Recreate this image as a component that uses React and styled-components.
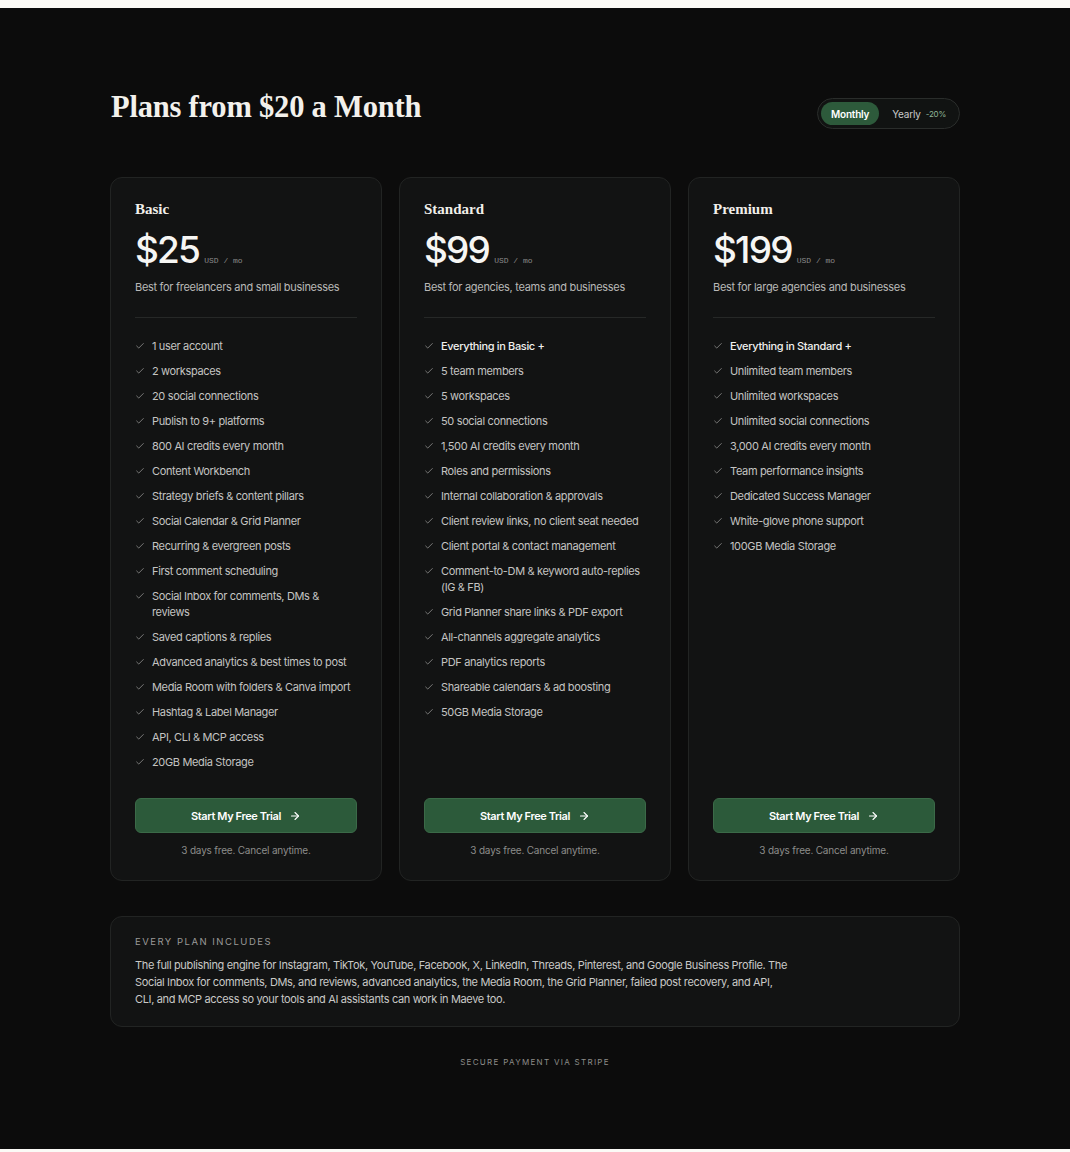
import styled, { createGlobalStyle } from 'styled-components';
import { Check, ArrowRight } from 'lucide-react';

const GlobalStyle = createGlobalStyle`
    * {
        box-sizing: border-box;
    }

    body {
        margin: 0;
        background: #fbfaf6;
        font-family: Inter, "Noto Sans", sans-serif;
        -webkit-font-smoothing: antialiased;
    }
`

const plans = [
    {
        name: "Basic",
        price: "$25",
        description: "Best for freelancers and small businesses",
        features: [
            "1 user account",
            "2 workspaces",
            "20 social connections",
            "Publish to 9+ platforms",
            "800 AI credits every month",
            "Content Workbench",
            "Strategy briefs & content pillars",
            "Social Calendar & Grid Planner",
            "Recurring & evergreen posts",
            "First comment scheduling",
            "Social Inbox for comments, DMs & reviews",
            "Saved captions & replies",
            "Advanced analytics & best times to post",
            "Media Room with folders & Canva import",
            "Hashtag & Label Manager",
            "API, CLI & MCP access",
            "20GB Media Storage",
        ],
    },
    {
        name: "Standard",
        price: "$99",
        description: "Best for agencies, teams and businesses",
        highlight: "Everything in Basic +",
        features: [
            "5 team members",
            "5 workspaces",
            "50 social connections",
            "1,500 AI credits every month",
            "Roles and permissions",
            "Internal collaboration & approvals",
            "Client review links, no client seat needed",
            "Client portal & contact management",
            "Comment-to-DM & keyword auto-replies (IG & FB)",
            "Grid Planner share links & PDF export",
            "All-channels aggregate analytics",
            "PDF analytics reports",
            "Shareable calendars & ad boosting",
            "50GB Media Storage",
        ],
    },
    {
        name: "Premium",
        price: "$199",
        description: "Best for large agencies and businesses",
        highlight: "Everything in Standard +",
        features: [
            "Unlimited team members",
            "Unlimited workspaces",
            "Unlimited social connections",
            "3,000 AI credits every month",
            "Team performance insights",
            "Dedicated Success Manager",
            "White-glove phone support",
            "100GB Media Storage",
        ],
    },
];

function Feature({ text, strong }) {
    return (
        <FeatureRow $strong={strong}>
            <CheckMark>
                <Check size={10} strokeWidth={2} />
            </CheckMark>
            <span>{text}</span>
        </FeatureRow>
    )
}

function PlanCard({ plan }) {
    return (
        <Card>
            <PlanName>{plan.name}</PlanName>
            <PriceRow>
                <Price>{plan.price}</Price>
                <Unit>USD / mo</Unit>
            </PriceRow>
            <Description>{plan.description}</Description>
            <Divider />
            <Features>
                {plan.highlight && <Feature text={plan.highlight} strong />}
                {plan.features.map(f => <Feature key={f} text={f} />)}
            </Features>
            <TrialButton>
                Start My Free Trial
                <ArrowRight size={12} strokeWidth={2.2} />
            </TrialButton>
            <Footnote>3 days free. Cancel anytime.</Footnote>
        </Card>
    )
}

export default function App() {
    return (
        <>
            <GlobalStyle />
            <Page>
                <Container>
                    <Header>
                        <Title>Plans from $20 a Month</Title>
                        <Toggle>
                            <ToggleOption $active>Monthly</ToggleOption>
                            <ToggleOption>
                                Yearly <Discount>-20%</Discount>
                            </ToggleOption>
                        </Toggle>
                    </Header>
                    <Cards>
                        {plans.map(plan => <PlanCard key={plan.name} plan={plan} />)}
                    </Cards>
                    <Includes>
                        <IncludesLabel>Every plan includes</IncludesLabel>
                        <IncludesText>
                            The full publishing engine for Instagram, TikTok, YouTube, Facebook, X, LinkedIn, Threads, Pinterest, and Google Business Profile. The Social Inbox for comments, DMs, and reviews, advanced analytics, the Media Room, the Grid Planner, failed post recovery, and API, CLI, and MCP access so your tools and AI assistants can work in Maeve too.
                        </IncludesText>
                    </Includes>
                    <Secure>Secure payment via Stripe</Secure>
                </Container>
            </Page>
        </>
    )
}

const Page = styled.div`
    margin-top: 8px;
    min-height: 1141px;
    background: #0c0c0c;
    padding: 90px 0 60px;
`

const Container = styled.div`
    width: 850px;
    margin: 0 auto;
    display: flex;
    flex-direction: column;
`

const Header = styled.div`
    display: flex;
    justify-content: space-between;
    align-items: center;
    height: 31px;
    margin-bottom: 48px;
`

const Title = styled.h1`
    margin: 0 0 13px 1px;
    font-family: "Liberation Serif", "DejaVu Serif", serif;
    font-weight: 700;
    font-size: 30.5px;
    line-height: 36px;
    color: #f3f1ec;
    letter-spacing: -0.2px;
`

const Toggle = styled.div`
    width: 143px;
    height: 31px;
    display: flex;
    align-items: center;
    gap: 2px;
    padding: 0 3px;
    border-radius: 999px;
    background: #111312;
    border: 1px solid #2a2d2b;
`

const ToggleOption = styled.div`
    height: 23px;
    padding: 0 ${p => p.$active ? '10px' : '11px'};
    display: flex;
    align-items: center;
    gap: 5px;
    border-radius: 999px;
    font-size: 10px;
    font-weight: ${p => p.$active ? 600 : 400};
    letter-spacing: -0.2px;
    color: ${p => p.$active ? '#ffffff' : '#c9c9c9'};
    background: ${p => p.$active ? '#2d5a3b' : 'transparent'};
    white-space: nowrap;
`

const Discount = styled.span`
    font-size: 8px;
    color: #8fb597;
`

const Cards = styled.div`
    display: grid;
    grid-template-columns: repeat(3, 1fr);
    gap: 17px;
`

const Card = styled.div`
    display: flex;
    flex-direction: column;
    padding: 22px 24px 22px;
    background: #121313;
    border: 1px solid #222423;
    border-radius: 12px;
`

const PlanName = styled.h2`
    margin: 0;
    font-family: "Liberation Serif", "DejaVu Serif", serif;
    font-weight: 700;
    font-size: 15px;
    line-height: 18px;
    color: #f1efea;
`

const PriceRow = styled.div`
    display: flex;
    align-items: baseline;
    gap: 5px;
    margin-top: 10px;
`

const Price = styled.span`
    font-size: 37px;
    line-height: 44px;
    font-weight: 500;
    color: #f6f6f4;
    letter-spacing: -1.8px;
`

const Unit = styled.span`
    font-family: "Liberation Mono", monospace;
    font-size: 8px;
    color: #8a8a8a;
`

const Description = styled.p`
    margin: 7px 0 0;
    font-size: 11px;
    line-height: 16px;
    color: #b9b9b7;
    letter-spacing: -0.3px;
`

const Divider = styled.hr`
    margin: 22px 0 0;
    border: none;
    border-top: 1px solid #262827;
`

const Features = styled.ul`
    list-style: none;
    margin: 20px 0 0;
    padding: 0;
    display: flex;
    flex-direction: column;
    gap: 9px;
    flex: 1;
`

const FeatureRow = styled.li`
    display: flex;
    align-items: flex-start;
    gap: 7px;
    font-size: 11px;
    line-height: 16px;
    letter-spacing: -0.35px;
    color: ${p => p.$strong ? '#f0f0ee' : '#c4c4c2'};
    font-weight: ${p => p.$strong ? 500 : 400};
`

const CheckMark = styled.span`
    flex: none;
    width: 10px;
    height: 16px;
    display: flex;
    align-items: center;
    color: #8c8c8a;
`

const TrialButton = styled.button`
    margin-top: 28px;
    height: 35px;
    display: flex;
    align-items: center;
    justify-content: center;
    gap: 8px;
    border-radius: 6px;
    border: 1px solid #3b6a48;
    background: #2c5a3a;
    color: #ffffff;
    font-family: Inter, "Noto Sans", sans-serif;
    font-size: 11px;
    font-weight: 600;
    letter-spacing: -0.4px;
    cursor: pointer;
`

const Footnote = styled.p`
    margin: 9px 0 0;
    text-align: center;
    font-size: 10px;
    line-height: 16px;
    letter-spacing: -0.2px;
    color: #8c8c8a;
`

const Includes = styled.div`
    margin-top: 35px;
    padding: 18px 24px 18px;
    background: #121313;
    border: 1px solid #222423;
    border-radius: 12px;
`

const IncludesLabel = styled.div`
    font-size: 9.5px;
    line-height: 14px;
    letter-spacing: 1.5px;
    text-transform: uppercase;
    color: #9a9a98;
`

const IncludesText = styled.p`
    margin: 8px 0 0;
    max-width: 655px;
    font-size: 11px;
    line-height: 17px;
    color: #c9c9c7;
    letter-spacing: -0.35px;
`

const Secure = styled.div`
    margin-top: 30px;
    text-align: center;
    font-size: 8px;
    letter-spacing: 1.3px;
    text-transform: uppercase;
    color: #8c8c8a;
`
